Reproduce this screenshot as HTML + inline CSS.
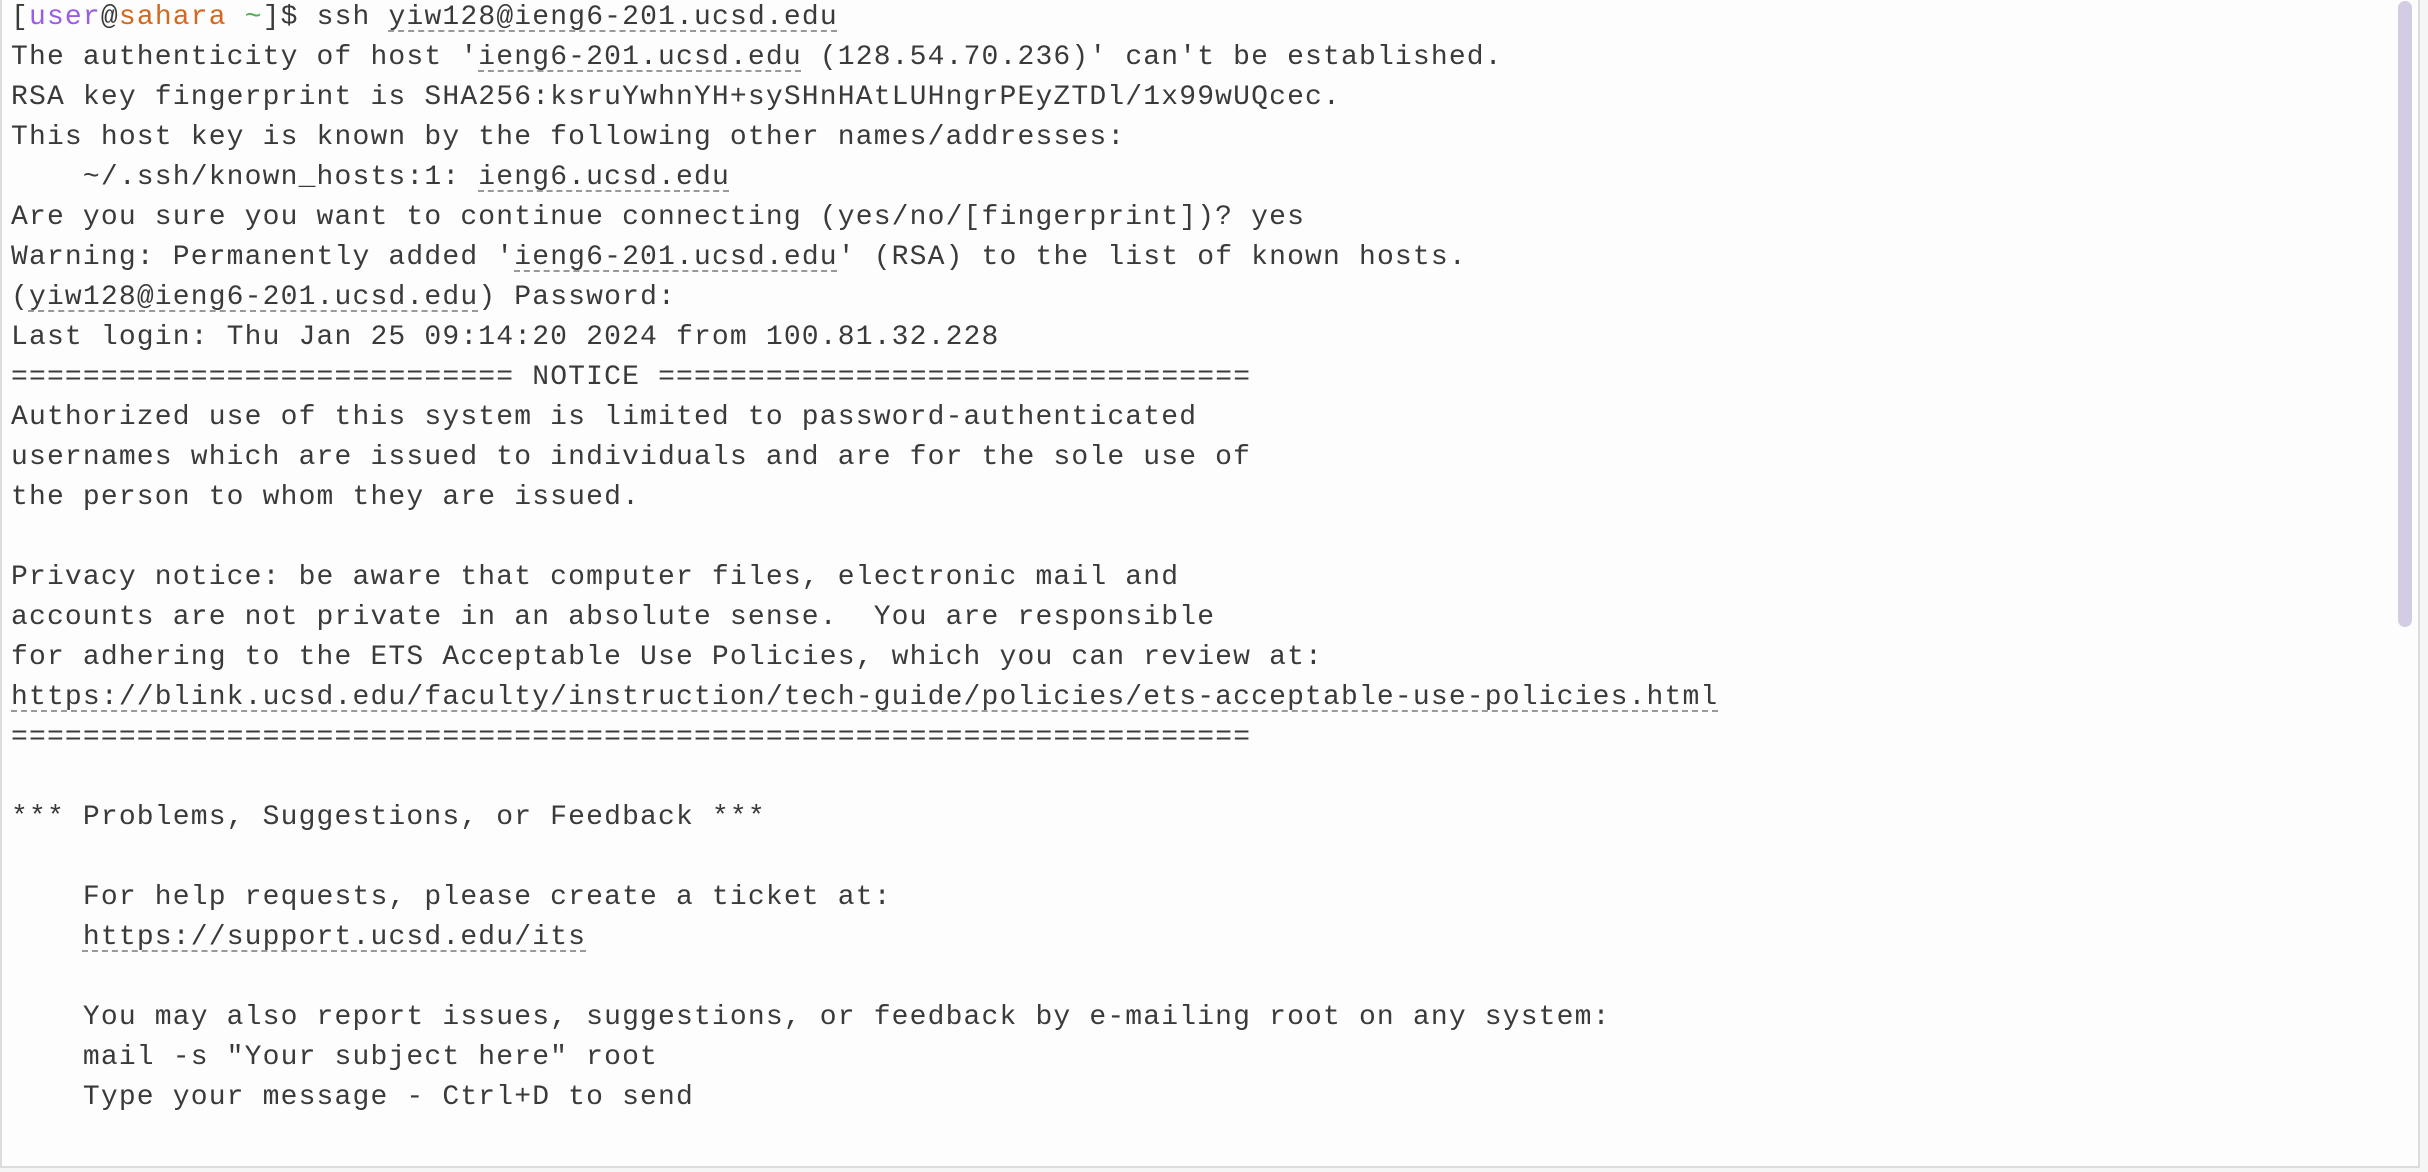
<!DOCTYPE html>
<html><head><meta charset="utf-8"><style>
html,body{margin:0;padding:0;width:2428px;height:1172px;background:#f5f5f5;overflow:hidden}
#t{position:absolute;left:0;top:0;width:2416px;height:1166px;background:#fdfdfd;border:2px solid #dcdcdc;border-top:none;box-sizing:content-box}
pre{position:absolute;left:9px;top:-2px;margin:0;font-family:"Liberation Mono",monospace;font-size:28px;letter-spacing:1.17px;line-height:40px;color:#3a3a3a}
u{text-decoration:underline dashed #999;text-decoration-thickness:2px;text-underline-offset:6px}
.p{color:#9b5de5}.o{color:#d2691e}.g{color:#4caf50}
#sb{position:absolute;left:2396px;top:1px;width:14px;height:626px;background:#d3cce3;border-radius:7px}
</style></head><body><div id="t"><pre>[<span class="p">user</span>@<span class="o">sahara</span> <span class="g">~</span>]$ ssh <u>yiw128@ieng6-201.ucsd.edu</u>
The authenticity of host '<u>ieng6-201.ucsd.edu</u> (128.54.70.236)' can't be established.
RSA key fingerprint is SHA256:ksruYwhnYH+sySHnHAtLUHngrPEyZTDl/1x99wUQcec.
This host key is known by the following other names/addresses:
    ~/.ssh/known_hosts:1: <u>ieng6.ucsd.edu</u>
Are you sure you want to continue connecting (yes/no/[fingerprint])? yes
Warning: Permanently added '<u>ieng6-201.ucsd.edu</u>' (RSA) to the list of known hosts.
(<u>yiw128@ieng6-201.ucsd.edu</u>) Password:
Last login: Thu Jan 25 09:14:20 2024 from 100.81.32.228
<span>==========</span><span>==========</span><span>========</span> NOTICE <span>==========</span><span>==========</span><span>==========</span><span>===</span>
Authorized use of this system is limited to password-authenticated
usernames which are issued to individuals and are for the sole use of
the person to whom they are issued.

Privacy notice: be aware that computer files, electronic mail and
accounts are not private in an absolute sense.  You are responsible
for adhering to the ETS Acceptable Use Policies, which you can review at:
<u>https://blink.ucsd.edu/faculty/instruction/tech-guide/policies/ets-acceptable-use-policies.html</u>
<span>==========</span><span>==========</span><span>==========</span><span>==========</span><span>==========</span><span>==========</span><span>=========</span>

*** Problems, Suggestions, or Feedback ***

    For help requests, please create a ticket at:
    <u>https://support.ucsd.edu/its</u>

    You may also report issues, suggestions, or feedback by e-mailing root on any system:
    mail -s "Your subject here" root
    Type your message - Ctrl+D to send</pre><div id="sb"></div></div></body></html>
